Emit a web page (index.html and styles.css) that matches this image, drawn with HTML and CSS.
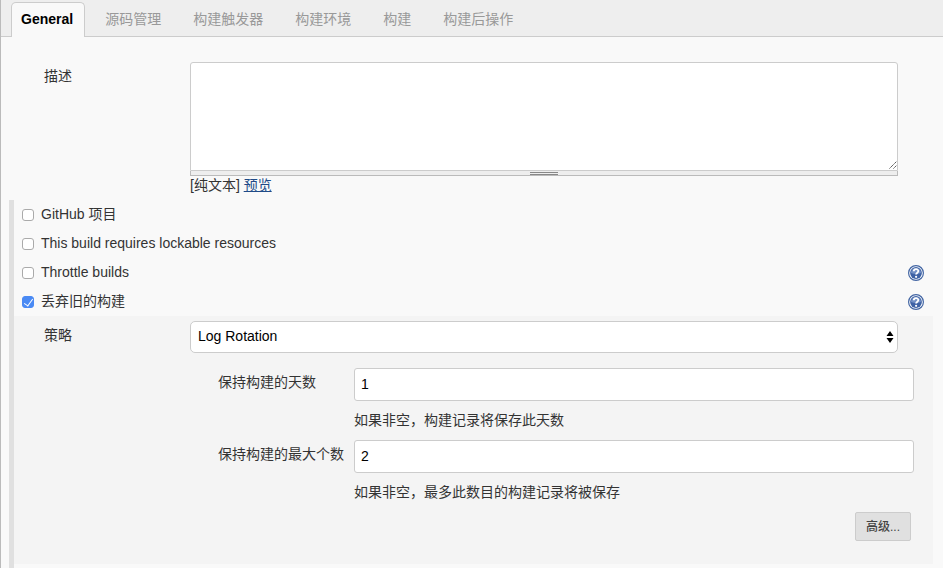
FILE: index.html
```html
<!DOCTYPE html>
<html lang="zh-CN">
<head>
  <meta charset="UTF-8">
  <meta name="viewport" content="width=device-width, initial-scale=1.0">
  <title>General</title>
  <link rel="stylesheet" href="styles.css">
</head>
<body>
  <svg width="0" height="0" class="sprite">
    <symbol id="help" viewBox="0 0 16 16">
      <circle cx="8" cy="8" r="7.4" fill="#fff" stroke="#4265a3" stroke-width="1.2"/>
      <circle cx="8" cy="8" r="5.9" fill="#3e62a5"/>
      <path d="M3 8a5 5 0 0 1 10 0q-5 2-10 0z" fill="#7391c6"/>
      <path d="M5.8 6.3C5.8 3.4 10.3 3.4 10.3 6.1C10.3 7.7 8.1 7.7 8.1 9.6" fill="none" stroke="#fff" stroke-width="1.8"/>
      <circle cx="8.1" cy="11.8" r="1.1" fill="#fff"/>
    </symbol>
  </svg>

  <nav class="tabs">
    <a href="#general" class="tab active">General</a>
    <a href="#scm" class="tab">源码管理</a>
    <a href="#triggers" class="tab">构建触发器</a>
    <a href="#env" class="tab">构建环境</a>
    <a href="#build" class="tab">构建</a>
    <a href="#post" class="tab">构建后操作</a>
  </nav>

  <form class="config" id="general">
    <div class="row description">
      <label class="name" for="description">描述</label>
      <div class="setting">
        <div class="editor">
          <textarea id="description"></textarea>
          <svg class="grip" viewBox="0 0 8 8"><path d="M0.5 7.5L7.5 0.5M4.5 7.5L7.5 4.5" stroke="#444" stroke-dasharray="1.4 0.5" fill="none"/></svg>
        </div>
        <div class="handle"><span></span></div>
        <div class="preview">[纯文本] <a href="#preview">预览</a></div>
      </div>
    </div>

    <div class="options">
      <div class="option">
        <input type="checkbox" id="github">
        <label for="github">GitHub 项目</label>
      </div>
      <div class="option">
        <input type="checkbox" id="lockable">
        <label for="lockable">This build requires lockable resources</label>
      </div>
      <div class="option">
        <input type="checkbox" id="throttle">
        <label for="throttle">Throttle builds</label>
        <a href="#help-throttle" class="help" aria-label="Help"><svg><use href="#help"/></svg></a>
      </div>
      <div class="option">
        <input type="checkbox" id="discard" checked>
        <label for="discard">丢弃旧的构建</label>
        <a href="#help-discard" class="help" aria-label="Help"><svg><use href="#help"/></svg></a>
      </div>

      <div class="nested">
        <div class="row">
          <label class="name" for="strategy">策略</label>
          <div class="setting select">
            <select id="strategy">
              <option>Log Rotation</option>
            </select>
            <svg class="arrows" viewBox="0 0 8 12"><path d="M4 0L7.5 5H0.5zM4 12L0.5 7H7.5z"/></svg>
          </div>
        </div>
        <div class="rotation">
          <label for="days">保持构建的天数</label>
          <input type="text" id="days" value="1">
          <p>如果非空，构建记录将保存此天数</p>
          <label for="max">保持构建的最大个数</label>
          <input type="text" id="max" value="2">
          <p>如果非空，最多此数目的构建记录将被保存</p>
        </div>
        <div class="actions">
          <button type="button">高级...</button>
        </div>
      </div>
    </div>
  </form>
</body>
</html>
```
FILE: styles.css
```css
* {
  box-sizing: border-box;
}
body {
  margin: 0;
  min-height: 100vh;
  display: flex;
  flex-direction: column;
  border-left: 1px solid #bbb;
  background: #f9f9f9;
  color: #333;
  font-family: "Liberation Sans", "Noto Sans CJK SC", sans-serif;
  font-size: 14px;
  line-height: 20px;
}
input, select, textarea {
  font: inherit;
  color: #000;
}
.sprite {
  position: absolute;
}
.tabs {
  display: flex;
  height: 37px;
  padding: 2px 10px 0;
  background: #eee;
  border-bottom: 1px solid #ccc;
}
.tab {
  height: 34px;
  padding: 7px 12px 0 20px;
  color: #999;
  text-decoration: none;
}
.tab.active {
  height: 35px;
  padding: 6px 11px 0 9px;
  border: 1px solid #ccc;
  border-bottom: 0;
  border-radius: 5px 5px 0 0;
  background: #f9f9f9;
  color: #000;
  font-weight: bold;
}
.config {
  flex: 1;
  display: flex;
  flex-direction: column;
  padding: 25px 10px 0 8px;
}
.row {
  display: flex;
  padding-right: 35px;
}
.description {
  padding-bottom: 5px;
}
.name {
  width: 181px;
  padding: 4px 0 0 35px;
}
.nested .name {
  width: 176px;
  padding-left: 30px;
}
.setting {
  flex: 1;
}
.editor, .select {
  position: relative;
}
textarea {
  display: block;
  width: 100%;
  height: 109px;
  border: 1px solid #ccc;
  border-radius: 3px 3px 0 0;
  background: #fff;
  resize: none;
}
.grip {
  position: absolute;
  right: 1px;
  bottom: 2px;
  width: 8px;
  height: 8px;
}
.handle {
  display: flex;
  justify-content: center;
  height: 5px;
  border: 1px solid #bbb;
  border-top: 0;
  background: #eee;
}
.handle span {
  width: 28px;
  height: 3px;
  margin-top: 1px;
  border: solid #888;
  border-width: 1px 0;
}
.preview {
  height: 19px;
  line-height: 18px;
}
.preview a {
  color: #204a87;
}
.options {
  flex: 1;
  border-left: 5px solid #e0e0e0;
}
.option {
  display: flex;
  align-items: center;
  height: 29px;
  padding: 0 9px 0 8px;
}
.option label {
  padding-bottom: 2px;
}
.option input {
  appearance: none;
  width: 12px;
  height: 12px;
  margin: 0 7px 0 0;
  border: 1px solid #aaa;
  border-radius: 3px;
  background: #fff;
}
.option input:checked {
  display: flex;
  justify-content: center;
  border-color: #4a8af4;
  background: #4a8af4;
}
.option input:checked::after {
  content: "";
  width: 4px;
  height: 8px;
  border: solid #fff;
  border-width: 0 1px 1px 0;
  transform: rotate(35deg);
}
.help {
  width: 16px;
  height: 16px;
  margin-left: auto;
}
.help svg {
  display: block;
  width: 16px;
  height: 16px;
}
.nested {
  padding: 5px 0 23px;
  background: #f4f4f4;
}
select {
  appearance: none;
  display: block;
  width: 100%;
  height: 32px;
  padding: 0 7px 2px;
  border: 1px solid #ccc;
  border-radius: 5px;
  background: #fff;
}
.arrows {
  position: absolute;
  top: 10px;
  right: 4px;
  width: 8px;
  height: 12px;
}
.rotation {
  display: grid;
  grid-template-columns: 136px 1fr;
  padding: 15px 19px 0 204px;
}
.rotation label {
  padding-top: 4px;
}
.rotation input {
  width: 100%;
  height: 33px;
  padding: 0 6px 1px;
  border: 1px solid #ccc;
  border-radius: 3px;
  background: #fff;
}
.rotation p {
  grid-column: 2;
  height: 30px;
  margin: 9px 0 0;
}
.actions {
  display: flex;
  justify-content: flex-end;
  padding-right: 22px;
}
button {
  width: 56px;
  height: 29px;
  padding: 0 0 3px;
  border: 1px solid #ccc;
  border-radius: 2px;
  background: #e0e0e0;
  color: #444;
  font: 500 12px "Liberation Sans", "Noto Sans CJK SC", sans-serif;
}
```
